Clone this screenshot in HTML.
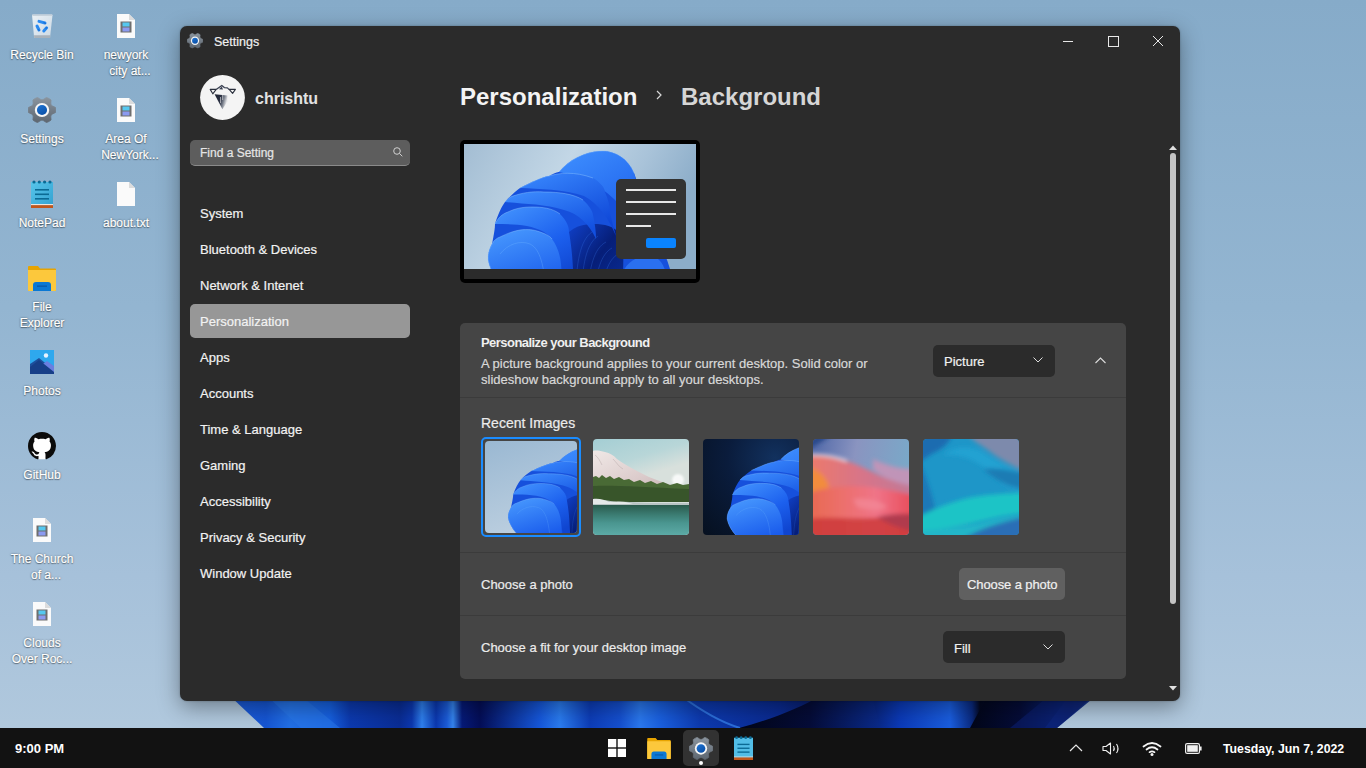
<!DOCTYPE html>
<html><head><meta charset="utf-8">
<style>
*{box-sizing:border-box}
html,body{margin:0;padding:0}
body{width:1366px;height:768px;overflow:hidden;position:relative;font-family:"Liberation Sans",sans-serif;
background:linear-gradient(180deg,#86abc9 0%,#93b5d1 40%,#a6c1da 75%,#b3cade 100%)}
.a{position:absolute;white-space:nowrap}
.dl{position:absolute;color:#fff;font-size:12px;line-height:16px;text-align:center;width:84px;text-shadow:0 0 2px rgba(0,0,0,.55),0 1px 1px rgba(0,0,0,.35)}
.win{position:absolute;left:180px;top:26px;width:1000px;height:675px;background:#2b2b2b;border-radius:7px;
box-shadow:0 6px 22px rgba(0,0,0,.38),0 0 2px rgba(0,0,0,.3)}
.nav{position:absolute;left:20px;color:#f2f2f2;font-size:13px;line-height:13px}
.card{position:absolute;left:280px;top:297px;width:666px;height:356px;background:#454545;border-radius:5px}
.div{position:absolute;left:0;width:666px;height:1px;background:#3b3b3b}
.t13{font-size:13px;line-height:13px}
.win div,.dl{-webkit-text-stroke:0.2px currentColor}
.win div[style*="bold"]{-webkit-text-stroke:0}
</style></head>
<body>
<svg width="0" height="0" style="position:absolute">
<defs>
<linearGradient id="gearg" x1="0" y1="0" x2="0" y2="1"><stop offset="0" stop-color="#8a949e"/><stop offset="1" stop-color="#5d6670"/></linearGradient>
<linearGradient id="blueg" x1="0" y1="0" x2="0.6" y2="1"><stop offset="0" stop-color="#1f74d4"/><stop offset="1" stop-color="#0b52aa"/></linearGradient>
<symbol id="gear" viewBox="0.2 0.7 27.6 26.6" preserveAspectRatio="none"><path d="M24.46 9.99L27.35 11.40A13.6 13.6 0 0 1 27.35 16.60L24.46 18.01Q22.31 18.80 22.70 21.05L22.92 24.26A13.6 13.6 0 0 1 18.43 26.86L15.75 25.06Q14.00 23.60 12.25 25.06L9.57 26.86A13.6 13.6 0 0 1 5.08 24.26L5.30 21.05Q5.69 18.80 3.54 18.01L0.65 16.60A13.6 13.6 0 0 1 0.65 11.40L3.54 9.99Q5.69 9.20 5.30 6.95L5.08 3.74A13.6 13.6 0 0 1 9.57 1.14L12.25 2.94Q14.00 4.40 15.75 2.94L18.43 1.14A13.6 13.6 0 0 1 22.92 3.74L22.70 6.95Q22.31 9.20 24.460 9.99Z" fill="url(#gearg)" stroke="url(#gearg)" stroke-width="0.8" stroke-linejoin="round"/><circle cx="14" cy="14" r="7.1" fill="#f6f6f6"/><circle cx="14" cy="14" r="5" fill="url(#blueg)"/></symbol>
<symbol id="vfile" viewBox="0 0 18 24"><path d="M0 0H12L18 6V24H0Z" fill="#fafafa"/><path d="M12 0V6H18Z" fill="#dcdcdc"/><rect x="3.5" y="7.5" width="11" height="11" fill="#6e6e6e"/><rect x="5.5" y="8.5" width="7" height="4" fill="#55c8f0"/><rect x="5.5" y="13.5" width="7" height="4" fill="#8b9af0"/></symbol>
<linearGradient id="pe" x1="0" y1="0" x2="0.6" y2="1"><stop offset="0" stop-color="#3f90ff"/><stop offset="1" stop-color="#1554e6"/></linearGradient>
<linearGradient id="pd" x1="0" y1="0" x2="0.6" y2="1"><stop offset="0" stop-color="#3a8aff"/><stop offset="1" stop-color="#0f47d8"/></linearGradient>
<linearGradient id="pc" x1="0" y1="0" x2="0.6" y2="1"><stop offset="0" stop-color="#3f8fff"/><stop offset="1" stop-color="#1250e0"/></linearGradient>
<linearGradient id="pb" x1="0" y1="0" x2="0.5" y2="1"><stop offset="0" stop-color="#4596ff"/><stop offset=".6" stop-color="#1c60ee"/><stop offset="1" stop-color="#0f45d0"/></linearGradient>
<linearGradient id="pa" x1="0" y1="0" x2="0.4" y2="1"><stop offset="0" stop-color="#4a9cff"/><stop offset="1" stop-color="#1a5cec"/></linearGradient>
<linearGradient id="dk" x1="0" y1="0" x2="1" y2="1"><stop offset="0" stop-color="#1040c8"/><stop offset=".5" stop-color="#061e78"/><stop offset="1" stop-color="#0a2e98"/></linearGradient>
<g id="bloom">
<path d="M44 150C34 138 26 128 24 115C24 108 26 104 28 100C30 90 31 84 31 80C34 70 38 62 41 58C46 52 52 47 56 44C68 38 78 33 85 32C92 28 95 28 95 28C105 16 120 8 136 7C150 6 164 14 170 29C176 45 178 55 180 65C190 85 200 105 206 125C208 135 208 145 206 150Z" fill="#1650dc"/>
<path d="M105 88C112 82 120 80 130 80C140 80 150 82 156 90C160 100 160 112 158 150H109Z" fill="url(#dk)"/>
<g fill="none" stroke="#3a7af0" stroke-width=".5" opacity=".55">
<path d="M112 150C112 120 116 96 128 88"/><path d="M118 150C118 122 122 100 134 92"/><path d="M124 150C125 124 130 104 142 98"/><path d="M131 150C132 128 137 110 148 104"/><path d="M138 150C140 130 144 116 154 110"/>
</g>
<path d="M95 28C105 16 120 8 136 7C150 6 164 14 170 29C174 40 172 50 171 55C180 70 190 90 196 110C180 90 165 70 150 55C135 40 115 32 95 28Z" fill="url(#pe)"/>
<path d="M56 44C68 38 78 33 85 32C95 29 110 27 129 34C136 38 141 44 141 48C144 55 146 62 146 68C148 78 150 85 152 92C145 75 135 60 120 52C100 45 75 45 56 44Z" fill="url(#pd)"/>
<path d="M41 58C44 55 46 53 49 52C58 49 68 47 80 48C95 48 110 50 119 56C125 61 129 68 129 71C131 80 132 88 132 95C125 80 115 70 100 66C80 60 60 60 41 58Z" fill="url(#pc)"/>
<path d="M31 80C34 74 38 70 44 68C52 64 60 63 68 63C78 63 88 64 96 70C102 76 105 82 105 88C107 100 109 112 110 150H100C98 115 92 95 80 88C66 80 48 80 31 80Z" fill="url(#pb)"/>
<path d="M44 150C34 138 26 128 24 115C24 108 26 104 28 100C30 96 33 94 36 93C44 89 50 87 56 86C64 85 70 86 73 87C80 89 86 92 88 95C93 102 96 110 97 120L99 150Z" fill="url(#pa)"/>
<path d="M153 150C156 120 170 112 186 112C195 113 202 118 206 150Z" fill="#2a70f0"/>
<g fill="none" stroke="#8cc4ff" stroke-width=".6" opacity=".75">
<path d="M44 150C34 138 26 128 24 115C24 108 26 104 28 100C30 96 33 94 36 93C44 89 50 87 56 86C64 85 70 86 73 87C80 89 86 92 88 95"/>
<path d="M31 80C34 74 38 70 44 68C52 64 60 63 68 63C78 63 88 64 96 70"/>
<path d="M41 58C44 55 46 53 49 52C58 49 68 47 80 48C95 48 110 50 119 56"/>
<path d="M56 44C68 38 78 33 85 32C95 29 110 27 129 34"/>
<path d="M95 28C105 16 120 8 136 7C150 6 164 14 170 29"/>
</g>
<path d="M36 110C44 100 56 96 66 100C74 104 80 115 82 150" fill="none" stroke="#6ab0ff" stroke-width=".6" opacity=".6"/>
</g>
</defs>
</svg>

<!-- desktop bloom band -->
<svg class="a" style="left:0;top:695px" width="1366" height="33" viewBox="0 695 1366 33">
<defs>
<linearGradient id="bb1" gradientUnits="userSpaceOnUse" x1="236" y1="0" x2="1094" y2="0"><stop offset="0.0000" stop-color="#1a5ad8"/><stop offset="0.0350" stop-color="#1656d4"/><stop offset="0.0629" stop-color="#2270e6"/><stop offset="0.1096" stop-color="#1660e0"/><stop offset="0.1329" stop-color="#0c3ab0"/><stop offset="0.1911" stop-color="#0a2d96"/><stop offset="0.2051" stop-color="#0c38b0"/><stop offset="0.2168" stop-color="#2f80ee"/><stop offset="0.2331" stop-color="#0b38b0"/><stop offset="0.2459" stop-color="#1c5cd8"/><stop offset="0.2529" stop-color="#3585ee"/><stop offset="0.2634" stop-color="#061a78"/><stop offset="0.2844" stop-color="#040e58"/><stop offset="0.3543" stop-color="#1658dc"/><stop offset="0.3776" stop-color="#2a7cf0"/><stop offset="0.4126" stop-color="#0d3db8"/><stop offset="0.4476" stop-color="#1550d0"/><stop offset="0.4709" stop-color="#2a78ee"/><stop offset="0.4942" stop-color="#1a60e0"/><stop offset="0.5408" stop-color="#0d3ab0"/><stop offset="0.6340" stop-color="#0a2a90"/><stop offset="0.7156" stop-color="#06124a"/><stop offset="0.7739" stop-color="#0b3ab8"/><stop offset="0.8322" stop-color="#1a5ee0"/><stop offset="0.8578" stop-color="#0a2a80"/><stop offset="0.8671" stop-color="#030820"/><stop offset="0.8904" stop-color="#050c38"/><stop offset="0.9371" stop-color="#0a2a88"/><stop offset="0.9720" stop-color="#102a80"/><stop offset="1.0000" stop-color="#1a3a90"/></linearGradient>
<linearGradient id="bbdk" x1="0" y1="0" x2="1" y2="0"><stop offset="0" stop-color="#020618"/><stop offset=".5" stop-color="#050c38"/><stop offset="1" stop-color="#0a2a8a"/></linearGradient>
</defs>
<path d="M229 695H1097L1057 728H264Z" fill="url(#bb1)"/>
<path d="M266 695L301 728H340L300 695Z" fill="#2a78ea" opacity=".55"/>
<path d="M822 695C800 708 770 720 739 728H880L872 695Z" fill="url(#bbdk)"/><path d="M988 695L970 728H1045L1070 695Z" fill="url(#bbdk)"/>
<path d="M680 695C700 710 720 722 740 728" stroke="#3a88f0" stroke-width="2" fill="none" opacity=".7"/>
<path d="M1050 695L1010 728H1057L1094 695Z" fill="#0b2070" opacity=".6"/>
</svg>

<!-- desktop icons -->
<svg class="a" style="left:32px;top:14px" width="21" height="24" viewBox="0 0 21 24"><defs><linearGradient id="rbg" x1="0" y1="0" x2="1" y2="1"><stop offset="0" stop-color="#eaf0f5"/><stop offset="1" stop-color="#ccd9e4"/></linearGradient></defs><path d="M0 1H20.5L18 24H2.2Z" fill="url(#rbg)"/><rect x="0.3" y="0.2" width="20" height="1.8" fill="#c6d2dc"/><path d="M2 21.2H18.3L18 24H2.2Z" fill="#a9b2bb"/><g stroke="#2a8af0" stroke-width="3" stroke-linecap="round" fill="none"><path d="M7 7.4L13 9"/><path d="M5 12L7 16"/><path d="M14.6 13.8L11.8 17"/></g><g stroke="#0b5cc4" stroke-width="1.2" stroke-linecap="round" fill="none" opacity=".6"><path d="M12 8.6L13.4 9.4"/><path d="M6.5 15.6L7.2 16.4"/><path d="M14 14.3L14.8 13.8"/></g></svg>
<div class="dl" style="left:0;top:47px">Recycle Bin</div>
<svg class="a" style="left:117px;top:14px" width="18" height="24"><use href="#vfile"/></svg>
<div class="dl" style="left:84px;top:47px">newyork</div>
<div class="dl" style="left:88px;top:63px">city at...</div>

<svg class="a" style="left:28px;top:97px" width="28" height="26"><use href="#gear" width="28" height="26"/></svg>
<div class="dl" style="left:0;top:131px">Settings</div>
<svg class="a" style="left:117px;top:98px" width="18" height="24"><use href="#vfile"/></svg>
<div class="dl" style="left:84px;top:131px">Area Of</div>
<div class="dl" style="left:88px;top:147px">NewYork...</div>

<svg class="a" style="left:31px;top:180px" width="22" height="28" viewBox="0 0 22 28"><rect x="0" y="2" width="22" height="23" fill="#45b5e0"/><rect x="0" y="2" width="22" height="23" fill="url(#npg)"/><g fill="#0b6a94"><circle cx="3" cy="2" r="1.6"/><circle cx="8.3" cy="2" r="1.6"/><circle cx="13.6" cy="2" r="1.6"/><circle cx="19" cy="2" r="1.6"/><rect x="4" y="9" width="14" height="1.6"/><rect x="4" y="13.5" width="14" height="1.6"/><rect x="4" y="18" width="14" height="1.6"/></g><rect x="0" y="24" width="22" height="1.2" fill="#f0e6dc"/><rect x="0" y="25.2" width="22" height="2.8" fill="#c2561a"/><defs><linearGradient id="npg" x1="0" y1="0" x2="1" y2="1"><stop offset="0" stop-color="#62d0f2" stop-opacity=".6"/><stop offset="1" stop-color="#2a96c8" stop-opacity=".6"/></linearGradient></defs></svg>
<div class="dl" style="left:0;top:215px">NotePad</div>
<svg class="a" style="left:117px;top:182px" width="18" height="24" viewBox="0 0 18 24"><path d="M0 0H12L18 6V24H0Z" fill="#fafafa"/><path d="M12 0V6H18Z" fill="#dcdcdc"/></svg>
<div class="dl" style="left:84px;top:215px">about.txt</div>

<svg class="a" style="left:28px;top:266px" width="28" height="25" viewBox="0 0 28 25"><path d="M1 0H10L12 2.5H27A1 1 0 0 1 28 3.5V24A1 1 0 0 1 27 25H1A1 1 0 0 1 0 24V1A1 1 0 0 1 1 0Z" fill="#e8a400"/><path d="M0 4H28V24A1 1 0 0 1 27 25H1A1 1 0 0 1 0 24Z" fill="#fcc83c"/><path d="M5 25V19A3 3 0 0 1 8 16H20A3 3 0 0 1 23 19V25Z" fill="#0a78d4"/><rect x="9" y="19.5" width="10" height="1.3" fill="#0858a8"/></svg>
<div class="dl" style="left:0;top:299px">File</div>
<div class="dl" style="left:0;top:315px">Explorer</div>

<svg class="a" style="left:30px;top:350px" width="24" height="24" viewBox="0 0 24 24"><rect width="24" height="24" fill="#2ea8ee"/><path d="M0 14L9 8L24 20V24H0Z" fill="#1d4f9c"/><path d="M10 16L17 11L24 16V24H14Z" fill="#6a7fe0"/><path d="M0 17L9 10L24 22V24H0Z" fill="#173f88"/><circle cx="16" cy="5.5" r="2.2" fill="#e8f4ff"/></svg>
<div class="dl" style="left:0;top:383px">Photos</div>

<svg class="a" style="left:28px;top:432px" width="28" height="28" viewBox="0 0 16 16"><circle cx="8" cy="8" r="7.6" fill="#fff"/><path fill="#0b0b0b" d="M8 0C3.58 0 0 3.58 0 8c0 3.54 2.29 6.53 5.47 7.59.4.07.55-.17.55-.38 0-.19-.01-.82-.01-1.49-2.01.37-2.53-.49-2.69-.94-.09-.23-.48-.94-.82-1.13-.28-.15-.68-.52-.01-.53.63-.01 1.08.58 1.23.82.72 1.21 1.87.87 2.33.66.07-.52.28-.87.51-1.07-1.78-.2-3.640-.89-3.64-3.95 0-.87.31-1.59.82-2.15-.08-.2-.36-1.02.08-2.120 0 0 .67-.21 2.2.82.64-.18 1.32-.27 2-.27.68 0 1.36.09 2 .27 1.53-1.04 2.2-.82 2.2-.82.44 1.1.16 1.92.08 2.12.51.56.82 1.27.82 2.15 0 3.07-1.87 3.75-3.65 3.95.29.25.54.73.54 1.48 0 1.07-.01 1.93-.01 2.2 0 .21.15.46.55.38A8.013 8.013 0 0016 8c0-4.42-3.58-8-8-8z"/></svg>
<div class="dl" style="left:0;top:467px">GitHub</div>

<svg class="a" style="left:33px;top:518px" width="18" height="24"><use href="#vfile"/></svg>
<div class="dl" style="left:0;top:551px">The Church</div>
<div class="dl" style="left:4px;top:567px">of a...</div>
<svg class="a" style="left:33px;top:602px" width="18" height="24"><use href="#vfile"/></svg>
<div class="dl" style="left:0;top:635px">Clouds</div>
<div class="dl" style="left:0;top:651px">Over Roc...</div>

<!-- settings window -->
<div class="win">
  <svg class="a" style="left:7px;top:7px" width="16" height="16"><use href="#gear" width="16" height="15.5"/></svg>
  <div class="a" style="left:34px;top:10px;font-size:12.5px;line-height:13px;color:#f0f0f0">Settings</div>
  <!-- window controls -->
  <svg class="a" style="left:880px;top:8px" width="110" height="16" viewBox="0 0 110 16"><g stroke="#e8e8e8" stroke-width="1" fill="none"><path d="M3 7.5H13"/><rect x="48.5" y="2.5" width="10" height="10"/><path d="M93 2L103 12M103 2L93 12"/></g></svg>

  <!-- avatar -->
  <svg class="a" style="left:20px;top:49px" width="45" height="45" viewBox="0 0 45 45"><defs><linearGradient id="avg" x1="0" y1="0" x2="1" y2="0.3"><stop offset="0" stop-color="#1e2433"/><stop offset=".5" stop-color="#2a3042"/><stop offset=".75" stop-color="#7a808c"/><stop offset="1" stop-color="#e8e8ea"/></linearGradient></defs><circle cx="22.5" cy="22.5" r="22.4" fill="#f4f4f4"/><path d="M10.2 14.4H16.2L12.8 18.8Z M29.2 14.4H35.4L32.6 18.4Z" fill="none" stroke="#2a2f3c" stroke-width="1.1" stroke-linejoin="round"/><path d="M16.2 14.6L21.8 10.4L24.3 12.6L27.4 12.9L29.2 14.6" fill="none" stroke="#3a4152" stroke-width="1.3" stroke-linejoin="round"/><path d="M19 14.2L21.8 11.5L23 14.5Z" fill="#3a4152"/><path d="M14.6 19.2L27.5 20.5L27.5 26.5L22.4 34.3Z" fill="url(#avg)"/><g fill="#f4f4f4" opacity=".8"><rect x="20.2" y="22" width=".7" height="6"/><rect x="22.4" y="20" width=".7" height="5"/></g></svg>
  <div class="a" style="left:75px;top:65px;font-size:16px;line-height:16px;font-weight:bold;color:#e2e2e2">chrishtu</div>

  <!-- search -->
  <div class="a" style="left:10px;top:114px;width:220px;height:26px;background:#5d5d5d;border-radius:5px;border-bottom:1px solid #8a8a8a"></div>
  <div class="a" style="left:20px;top:121px;font-size:12px;line-height:12px;color:#e6e6e6">Find a Setting</div>
  <svg class="a" style="left:213px;top:121px" width="10" height="10" viewBox="0 0 10 10"><circle cx="4" cy="4" r="3.3" fill="none" stroke="#d0d0d0" stroke-width="1"/><path d="M6.5 6.5L9.3 9.3" stroke="#d0d0d0" stroke-width="1"/></svg>

  <!-- nav -->
  <div class="a" style="left:10px;top:278px;width:220px;height:34px;background:#979797;border-radius:5px"></div>
  <div class="nav" style="top:181px">System</div>
  <div class="nav" style="top:217px">Bluetooth &amp; Devices</div>
  <div class="nav" style="top:253px">Network &amp; Intenet</div>
  <div class="nav" style="top:289px">Personalization</div>
  <div class="nav" style="top:325px">Apps</div>
  <div class="nav" style="top:361px">Accounts</div>
  <div class="nav" style="top:397px">Time &amp; Language</div>
  <div class="nav" style="top:433px">Gaming</div>
  <div class="nav" style="top:469px">Accessibility</div>
  <div class="nav" style="top:505px">Privacy &amp; Security</div>
  <div class="nav" style="top:541px">Window Update</div>

  <!-- heading -->
  <div class="a" style="left:280px;top:59px;font-size:24px;line-height:24px;font-weight:bold;color:#f4f4f4">Personalization</div>
  <svg class="a" style="left:475px;top:63px" width="8" height="12" viewBox="0 0 8 12"><path d="M2 2L6 6L2 10" fill="none" stroke="#d8d8d8" stroke-width="1.2"/></svg>
  <div class="a" style="left:501px;top:59px;font-size:24px;line-height:24px;font-weight:bold;color:#d6d6d6">Background</div>

  <!-- monitor preview -->
  <div class="a" style="left:280px;top:114px;width:240px;height:143px;background:#000;border-radius:5px"></div>
  <svg class="a" style="left:284px;top:118px" width="232" height="125" viewBox="0 0 232 125"><defs><linearGradient id="pbg" x1="0" y1="0" x2="1" y2="0.3"><stop offset="0" stop-color="#a3bdd3"/><stop offset=".45" stop-color="#c3d7e6"/><stop offset=".75" stop-color="#a9c3d9"/><stop offset="1" stop-color="#8cadc9"/></linearGradient></defs><rect width="232" height="125" fill="url(#pbg)"/><use href="#bloom"/></svg>
  <div class="a" style="left:284px;top:243px;width:232px;height:10px;background:#2b2b2b"></div>
  <div class="a" style="left:436px;top:153px;width:70px;height:80px;background:#333;border-radius:5px"></div>
  <div class="a" style="left:446px;top:163px;width:50px;height:2px;background:#e8e8e8"></div>
  <div class="a" style="left:446px;top:175px;width:50px;height:2px;background:#e8e8e8"></div>
  <div class="a" style="left:446px;top:187px;width:50px;height:2px;background:#e8e8e8"></div>
  <div class="a" style="left:446px;top:199px;width:25px;height:2px;background:#e8e8e8"></div>
  <div class="a" style="left:466px;top:212px;width:30px;height:10px;background:#0a84ff;border-radius:2px"></div>

  <!-- card -->
  <div class="card">
    <div class="a t13" style="left:21px;top:13px;font-weight:bold;color:#f0f0f0;letter-spacing:-0.55px">Personalize your Background</div>
    <div class="a" style="left:21px;top:33px;font-size:13px;line-height:16px;color:#d8d8d8;white-space:normal;width:420px">A picture background applies to your current desktop. Solid color or<br>slideshow background apply to all your desktops.</div>
    <div class="a" style="left:473px;top:22px;width:122px;height:32px;background:#2b2b2b;border-radius:5px"></div>
    <div class="a t13" style="left:484px;top:32px;color:#f0f0f0">Picture</div>
    <svg class="a" style="left:573px;top:34px" width="10" height="6" viewBox="0 0 10 6"><path d="M0.5 0.5L5 5L9.5 0.5" fill="none" stroke="#dcdcdc" stroke-width="1"/></svg>
    <svg class="a" style="left:635px;top:34px" width="11" height="7" viewBox="0 0 11 7"><path d="M0.5 6L5.5 1L10.5 6" fill="none" stroke="#dcdcdc" stroke-width="1.1"/></svg>
    <div class="div" style="top:74px"></div>
    <div class="a" style="left:21px;top:93px;font-size:14px;line-height:14px;color:#ececec">Recent Images</div>

    <div class="a" style="left:21px;top:114px;width:100px;height:100px;border:2px solid #1a8cff;border-radius:5px"></div>
    <div class="a" id="th1" style="left:25px;top:118px;width:92px;height:92px;border-radius:4px;overflow:hidden;background:linear-gradient(160deg,#9ab8d2,#c2d3e2)"><svg width="92" height="92" viewBox="0 0 96 96" style="display:block"><use href="#bloom" transform="matrix(0.755 0 0 0.68 6 1.5)"/></svg></div>
    <div class="a" id="th2" style="left:133px;top:116px;width:96px;height:96px;border-radius:4px;overflow:hidden"><svg width="96" height="96" viewBox="0 0 96 96" style="display:block"><defs>
<linearGradient id="t2sky" x1="0" y1="0" x2="0.3" y2="1"><stop offset="0" stop-color="#a4ced4"/><stop offset=".3" stop-color="#b8d6d8"/><stop offset=".5" stop-color="#d8e0dc"/></linearGradient>
<linearGradient id="t2w" x1="0" y1="0" x2="0" y2="1"><stop offset="0" stop-color="#2a5a4c"/><stop offset=".3" stop-color="#3a7a70"/><stop offset=".6" stop-color="#4a9690"/><stop offset="1" stop-color="#5caaa6"/></linearGradient>
<linearGradient id="t2m" x1="0" y1="0" x2="1" y2="1"><stop offset="0" stop-color="#f0e8e6"/><stop offset=".6" stop-color="#dccccc"/><stop offset="1" stop-color="#c8b4b4"/></linearGradient>
<filter id="bl2"><feGaussianBlur stdDeviation="1.2"/></filter>
<filter id="bl2b"><feGaussianBlur stdDeviation="0.6"/></filter>
</defs>
<rect width="96" height="96" fill="url(#t2sky)"/>
<circle cx="85" cy="41" r="6" fill="#fff" opacity=".8" filter="url(#bl2)"/>
<path d="M0 12C3 11 8 12 12 13C17 14 20 16 24 20C32 26 44 32 56 38C66 42 74 45 82 47L0 52Z" fill="url(#t2m)"/>
<path d="M2 16C5 18 7 22 9 26M20 20C24 24 26 28 30 30" stroke="#b0a0a0" stroke-width=".8" fill="none" opacity=".5"/>
<g filter="url(#bl2b)">
<path d="M0 38L3 37L6 39L9 36L13 39L17 37L21 40L26 38L31 41L36 40L41 43L47 41L52 44L58 42L64 45L70 43L77 46L84 44L90 46L96 45V63H0Z" fill="#4a6a36"/>
<path d="M0 47C20 46 50 48 96 50V63H0Z" fill="#34502a" opacity=".8"/>
</g>
<path d="M0 61C8 60 16 62 24 63C34 62 46 64 58 64H96V67H0Z" fill="#b8c4c4"/>
<path d="M0 60C6 59 12 61 16 63C24 62 32 62 40 65H0Z" fill="#e4e8e8"/>
<rect y="66" width="96" height="30" fill="url(#t2w)"/>
</svg></div>
    <div class="a" id="th3" style="left:243px;top:116px;width:96px;height:96px;border-radius:4px;overflow:hidden;background:radial-gradient(circle at 75% 20%,#12315e 0%,#0a1c3c 45%,#06101f 100%)"><svg width="96" height="96" viewBox="0 0 96 96" style="display:block"><use href="#bloom" transform="matrix(0.755 0 0 0.68 6 1.5)"/></svg></div>
    <div class="a" id="th4" style="left:353px;top:116px;width:96px;height:96px;border-radius:4px;overflow:hidden"><svg width="96" height="96" viewBox="0 0 96 96" style="display:block"><defs>
<linearGradient id="t4top" x1="0" y1="0" x2="1" y2="0.2"><stop offset="0" stop-color="#5068a8"/><stop offset=".45" stop-color="#8a94c0"/><stop offset="1" stop-color="#7aa8c8"/></linearGradient>
<linearGradient id="t4b1" x1="0" y1="0" x2="1" y2="0"><stop offset="0" stop-color="#ec7a6a"/><stop offset=".5" stop-color="#d87488"/><stop offset="1" stop-color="#c07a98"/></linearGradient>
<linearGradient id="t4b2" x1="0" y1="0" x2="1" y2="0"><stop offset="0" stop-color="#e86a50"/><stop offset=".65" stop-color="#f07488"/><stop offset="1" stop-color="#e84c5a"/></linearGradient>
<filter id="bl4" x="-20%" y="-20%" width="140%" height="140%"><feGaussianBlur stdDeviation="2.2"/></filter>
</defs>
<rect width="96" height="96" fill="url(#t4top)"/>
<g filter="url(#bl4)">
<path d="M-5 -5H20C10 2 4 6 -5 10Z" fill="#2a4a8a"/>
<path d="M60 20C72 26 86 30 100 30V50C86 46 72 40 60 30Z" fill="#c094b8"/>
<path d="M-5 16C20 14 46 26 66 36C78 42 90 45 100 47V100H-5Z" fill="url(#t4b1)"/>
<path d="M-5 28C5 30 14 38 16 48C12 54 4 56 -5 56Z" fill="#f28c3c"/>
<path d="M-5 54C20 46 50 46 70 50C82 52 92 54 100 56V100H-5Z" fill="url(#t4b2)"/>
<path d="M40 60C55 58 68 62 74 68C70 72 56 72 44 68Z" fill="#f48a98" opacity=".7"/>
<path d="M-5 80C20 76 50 84 100 74V100H-5Z" fill="#cc3a3a" opacity=".85"/>
<path d="M64 78C80 74 92 74 100 76V92C90 90 76 86 64 78Z" fill="#a83a50" opacity=".8"/>
<path d="M-4 16C10 15 20 17 34 22" stroke="#f4eef8" stroke-width="2.5" fill="none" opacity=".7"/>
</g>
</svg></div>
    <div class="a" id="th5" style="left:463px;top:116px;width:96px;height:96px;border-radius:4px;overflow:hidden"><svg width="96" height="96" viewBox="0 0 96 96" style="display:block"><defs>
<filter id="bl5" x="-20%" y="-20%" width="140%" height="140%"><feGaussianBlur stdDeviation="2"/></filter>
</defs>
<rect width="96" height="96" fill="#1e96c8"/>
<g filter="url(#bl5)">
<path d="M44 -5H100V32C88 26 76 20 66 12C58 6 50 2 44 -5Z" fill="#7d8aac"/>
<path d="M-5 -5H30C26 4 20 10 10 14L-5 24Z" fill="#1a6cb0"/>
<path d="M-5 20C5 40 10 60 14 78L-5 82Z" fill="#1a78b8"/>
<path d="M20 16C40 14 60 24 74 40C80 46 88 50 100 52V34C86 30 72 22 58 12C44 6 30 8 20 16Z" fill="#24a2d2"/>
<path d="M60 30C72 40 84 48 100 50V34C88 32 76 28 60 30Z" fill="#1a7cb4"/>
<path d="M-5 78C10 70 30 62 50 58C70 55 85 54 100 54V74C80 76 60 82 40 86C20 90 5 92 -5 94Z" fill="#1ec4c6"/>
<path d="M-5 92C20 90 40 88 60 84C75 80 88 78 100 76V100H-5Z" fill="#22b6c8"/>
<path d="M40 100C55 90 75 84 100 78V100Z" fill="#2a6eb6"/>
</g>
</svg></div>

    <div class="div" style="top:229px"></div>
    <div class="a t13" style="left:21px;top:255px;color:#ececec">Choose a photo</div>
    <div class="a" style="left:499px;top:245px;width:106px;height:32px;background:#606060;border-radius:5px"></div>
    <div class="a t13" style="left:507px;top:255px;color:#f0f0f0;letter-spacing:-0.1px">Choose a photo</div>
    <div class="div" style="top:292px"></div>
    <div class="a t13" style="left:21px;top:318px;color:#ececec">Choose a fit for your desktop image</div>
    <div class="a" style="left:483px;top:308px;width:122px;height:32px;background:#2b2b2b;border-radius:5px"></div>
    <div class="a t13" style="left:494px;top:319px;color:#f0f0f0">Fill</div>
    <svg class="a" style="left:583px;top:321px" width="10" height="6" viewBox="0 0 10 6"><path d="M0.5 0.5L5 5L9.5 0.5" fill="none" stroke="#dcdcdc" stroke-width="1"/></svg>
  </div>

  <!-- scrollbar -->
  <svg class="a" style="left:989px;top:119px" width="8" height="5" viewBox="0 0 8 5"><path d="M0 5L4 0.5L8 5Z" fill="#e0e0e0"/></svg>
  <div class="a" style="left:990px;top:127px;width:6px;height:451px;background:#c4c4c4;border-radius:3px"></div>
  <svg class="a" style="left:989px;top:660px" width="8" height="5" viewBox="0 0 8 5"><path d="M0 0L4 4.5L8 0Z" fill="#e0e0e0"/></svg>
</div>

<!-- taskbar -->
<div class="a" style="left:0;top:728px;width:1366px;height:40px;background:#121212"></div>
<div class="a" style="left:15px;top:742px;font-size:13px;line-height:13px;font-weight:bold;color:#fff">9:00 PM</div>
<svg class="a" style="left:608px;top:739px" width="18" height="18" viewBox="0 0 18 18"><g fill="#fff"><rect x="0" y="0" width="8.3" height="8.3"/><rect x="9.7" y="0" width="8.3" height="8.3"/><rect x="0" y="9.7" width="8.3" height="8.3"/><rect x="9.7" y="9.7" width="8.3" height="8.3"/></g></svg>
<svg class="a" style="left:647px;top:738px" width="24" height="21" viewBox="0 0 28 25"><path d="M1 0H10L12 2.5H27A1 1 0 0 1 28 3.5V24A1 1 0 0 1 27 25H1A1 1 0 0 1 0 24V1A1 1 0 0 1 1 0Z" fill="#e8a400"/><path d="M0 4H28V24A1 1 0 0 1 27 25H1A1 1 0 0 1 0 24Z" fill="#fcc83c"/><path d="M5 25V19A3 3 0 0 1 8 16H20A3 3 0 0 1 23 19V25Z" fill="#0a78d4"/><rect x="9" y="19.5" width="10" height="1.3" fill="#0858a8"/></svg>
<div class="a" style="left:683px;top:730px;width:36px;height:36px;background:#323232;border-radius:5px"></div>
<svg class="a" style="left:689px;top:737px" width="24" height="23"><use href="#gear" width="24" height="23"/></svg>
<div class="a" style="left:699px;top:761px;width:4px;height:4px;background:#fff;border-radius:2px"></div>
<svg class="a" style="left:734px;top:736px" width="19" height="24" viewBox="0 0 22 28" preserveAspectRatio="none"><rect x="0" y="2" width="22" height="23" fill="#52bde6"/><g fill="#0b6a94"><circle cx="3" cy="2" r="1.6"/><circle cx="8.3" cy="2" r="1.6"/><circle cx="13.6" cy="2" r="1.6"/><circle cx="19" cy="2" r="1.6"/><rect x="4" y="9" width="14" height="1.6"/><rect x="4" y="13.5" width="14" height="1.6"/><rect x="4" y="18" width="14" height="1.6"/></g><rect x="0" y="24" width="22" height="1.2" fill="#f0e6dc"/><rect x="0" y="25.2" width="22" height="2.8" fill="#c2561a"/></svg>

<svg class="a" style="left:1069px;top:743px" width="14" height="9" viewBox="0 0 14 9"><path d="M1 8L7 2L13 8" fill="none" stroke="#e8e8e8" stroke-width="1.2"/></svg>
<svg class="a" style="left:1102px;top:742px" width="20" height="13" viewBox="0 0 20 13"><path d="M1 4.5H4L8.5 1V12L4 8.5H1Z" fill="none" stroke="#f0f0f0" stroke-width="1.1" stroke-linejoin="round"/><path d="M11.5 4Q13 6.5 11.5 9M14.5 2Q17.5 6.5 14.5 11" fill="none" stroke="#f0f0f0" stroke-width="1.1"/></svg>
<svg class="a" style="left:1142px;top:741px" width="20" height="15" viewBox="0 0 20 15"><g fill="none" stroke="#f4f4f4" stroke-width="1.7" stroke-linecap="round"><path d="M1.5 5.5Q10 -1.5 18.5 5.5"/><path d="M4.5 8.5Q10 4 15.5 8.5"/><path d="M7.5 11.2Q10 9.5 12.5 11.2"/></g><circle cx="10" cy="13.4" r="1.5" fill="#f4f4f4"/></svg>
<svg class="a" style="left:1185px;top:743px" width="17" height="11" viewBox="0 0 17 11"><rect x="0.6" y="0.6" width="13.8" height="9.8" rx="1.5" fill="none" stroke="#f0f0f0" stroke-width="1.2"/><rect x="2.2" y="2.2" width="10.6" height="6.6" fill="#f0f0f0"/><rect x="15" y="3.5" width="1.6" height="4" fill="#f0f0f0"/></svg>
<div class="a" style="left:1223px;top:743px;font-size:12.3px;line-height:13px;font-weight:bold;color:#fff">Tuesday, Jun 7, 2022</div>
</body></html>
